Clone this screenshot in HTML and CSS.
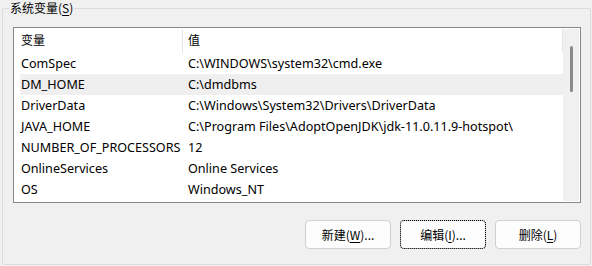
FILE: index.html
```html
<!DOCTYPE html>
<html lang="zh-CN">
<head>
    <meta charset="UTF-8">
    <title>系统变量</title>
    <link rel="stylesheet" href="styles.css">
</head>
<body>
    <fieldset class="group">
        <legend>系统变量(<u>S</u>)</legend>

        <div class="listbox">
            <div class="list-main">
                <div class="row header">
                    <div class="col-name">变量</div>
                    <div class="col-value">值</div>
                </div>
                <div class="row">
                    <div class="col-name">ComSpec</div>
                    <div class="col-value">C:\WINDOWS\system32\cmd.exe</div>
                </div>
                <div class="row selected">
                    <div class="col-name">DM_HOME</div>
                    <div class="col-value">C:\dmdbms</div>
                </div>
                <div class="row">
                    <div class="col-name">DriverData</div>
                    <div class="col-value">C:\Windows\System32\Drivers\DriverData</div>
                </div>
                <div class="row">
                    <div class="col-name">JAVA_HOME</div>
                    <div class="col-value">C:\Program Files\AdoptOpenJDK\jdk-11.0.11.9-hotspot\</div>
                </div>
                <div class="row">
                    <div class="col-name">NUMBER_OF_PROCESSORS</div>
                    <div class="col-value">12</div>
                </div>
                <div class="row">
                    <div class="col-name">OnlineServices</div>
                    <div class="col-value">Online Services</div>
                </div>
                <div class="row">
                    <div class="col-name">OS</div>
                    <div class="col-value">Windows_NT</div>
                </div>
            </div>
            <div class="scrollbar">
                <div class="thumb"></div>
            </div>
        </div>

        <div class="buttons">
            <button class="btn">新建(<u>W</u>)...</button>
            <button class="btn focused">编辑(<u>I</u>)...</button>
            <button class="btn">删除(<u>L</u>)</button>
        </div>
    </fieldset>
</body>
</html>
```

FILE: styles.css
```css
* {
    box-sizing: border-box;
}

body {
    margin: 0;
    background: #f0f0f0;
    font-family: "Noto Sans", "Noto Sans CJK SC", sans-serif;
    font-size: 12px;
    color: #000;
    height: 266px;
    overflow: hidden;
}

.group {
    margin: 0 1px 0 2px;
    padding: 11px 9px 16px 10px;
    border: 1px solid #dcdcdc;
    border-radius: 2px;
    height: 265px;
}

.group legend {
    padding: 0 1px;
    margin-left: -4px;
    line-height: 16px;
    font-family: "Noto Sans CJK SC", sans-serif;
}

u {
    text-underline-offset: 2px;
}

.listbox {
    display: flex;
    border: 1px solid #828790;
    background: #fff;
    height: 176px;
    padding: 1px;
    overflow: hidden;
}

.list-main {
    flex: 1;
    padding-left: 5px;
}

.row {
    display: flex;
    height: 21px;
    align-items: center;
    line-height: 21px;
    white-space: nowrap;
    font-size: 12.6px;
}

.row.header {
    height: 24px;
    font-size: 12px;
    font-family: "Noto Sans CJK SC", sans-serif;
}

.header .col-name {
    border-right: 1px solid #e5e5e5;
    height: 24px;
    line-height: 22px;
}

.header .col-value {
    flex: 1;
    border-right: 1px solid #e5e5e5;
    height: 24px;
    line-height: 22px;
}

.row.selected {
    background: #efefef;
}

.col-name {
    width: 163px;
    padding-left: 1px;
}

.col-value {
    padding-left: 5px;
}

.scrollbar {
    width: 16px;
    background: #f0f0f0;
    display: flex;
    justify-content: center;
    padding-top: 17px;
}

.thumb {
    width: 3px;
    height: 46px;
    background: #8a8a8a;
    border-radius: 2px;
}

.buttons {
    display: flex;
    justify-content: flex-end;
    gap: 9px;
    margin-top: 17px;
}

.btn {
    width: 86px;
    height: 29px;
    font-family: "Noto Sans CJK SC", sans-serif;
    font-size: 12px;
    background: #fdfdfd;
    border: 1px solid #d0d0d0;
    border-radius: 4px;
    color: #000;
    padding: 0;
}

.btn.focused {
    outline: 1px dotted #000;
    outline-offset: -1px;
    border-color: #c0c0c0;
}
```
